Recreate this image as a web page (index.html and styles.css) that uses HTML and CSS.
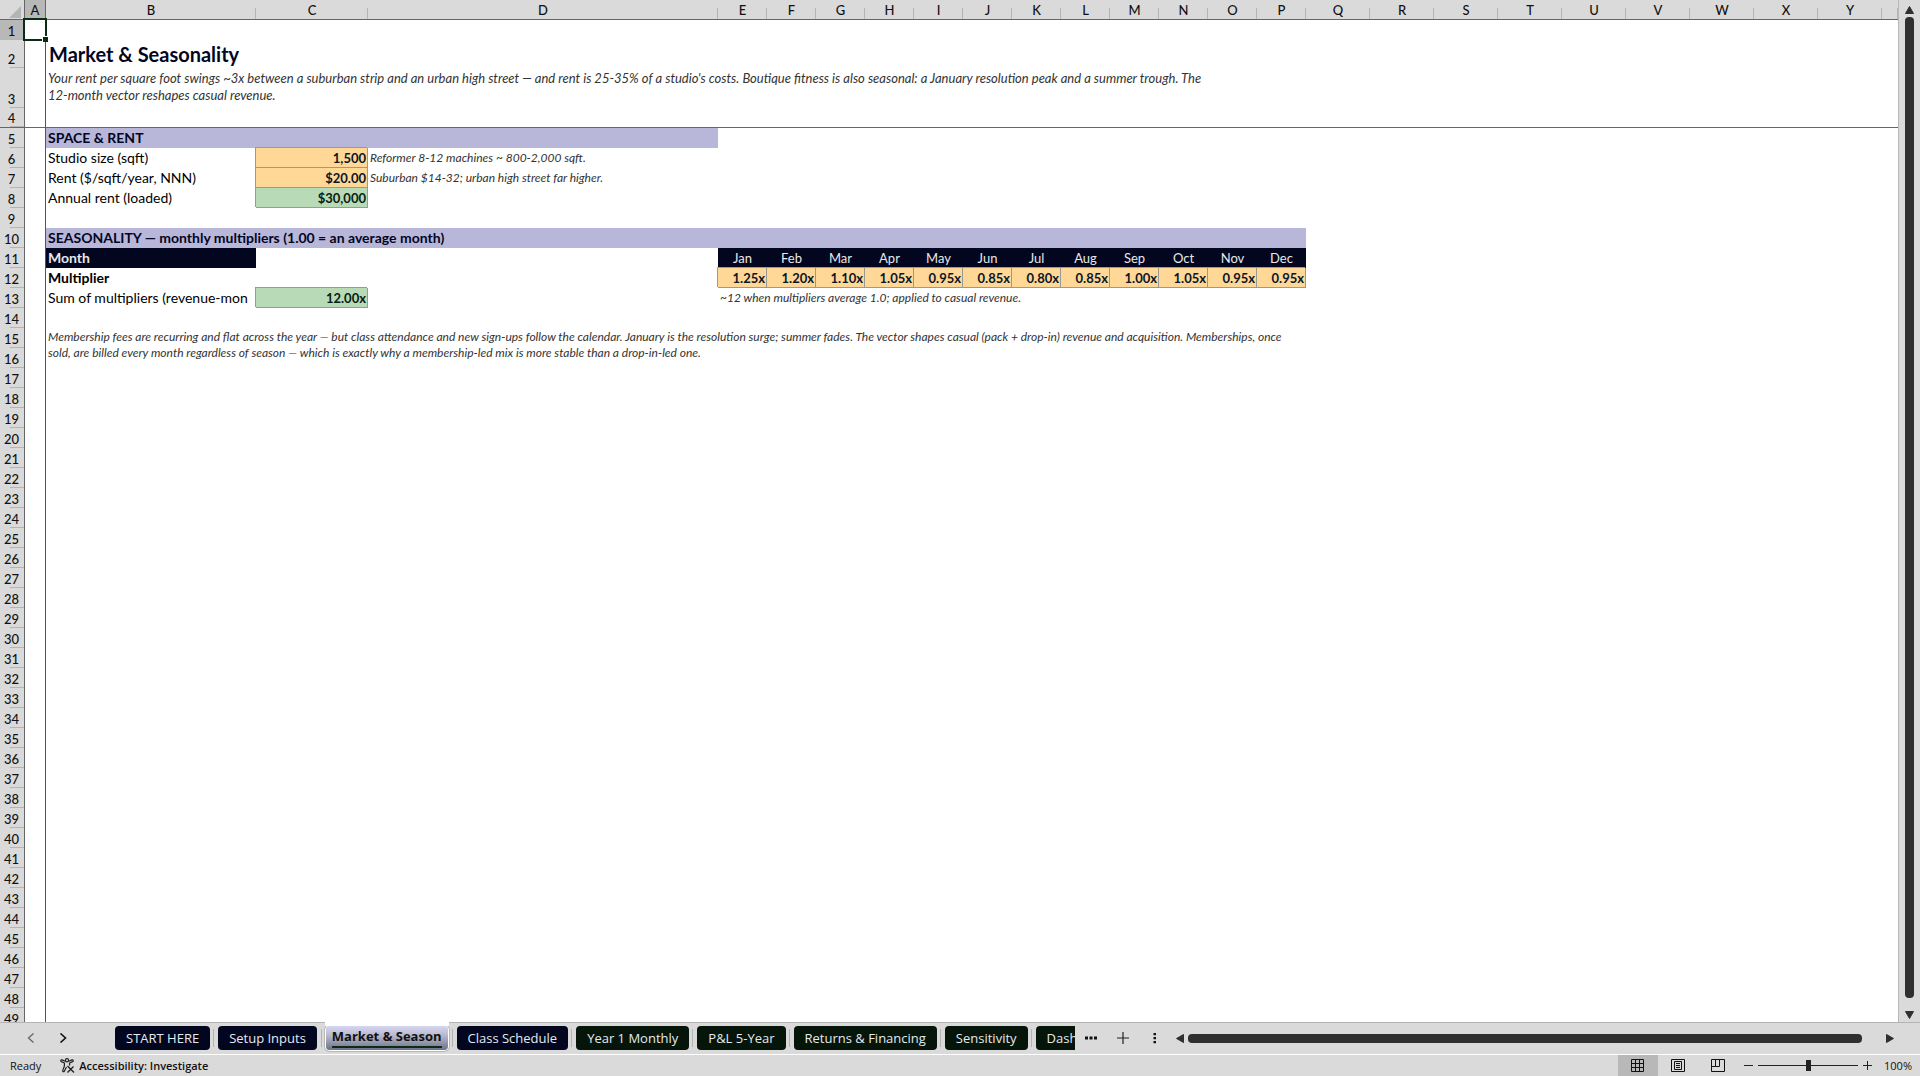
FILE: index.html
```html
<!DOCTYPE html>
<html lang="en">
<head>
    <meta charset="UTF-8">
    <meta name="viewport" content="width=device-width, initial-scale=1.0">
    <title>Market &amp; Seasonality</title>
    <link rel="stylesheet" href="styles.css">
</head>
<body>
    <main class="workspace">
        <div class="sheet">
            <table class="grid">
                <colgroup>
                    <col class="col-head">
                    <col class="col-a">
                    <col class="col-b">
                    <col class="col-c">
                    <col class="col-d">
                    <col class="col-month" span="12">
                    <col class="col-default" span="9">
                    <col>
                </colgroup>
                <thead>
                    <tr>
                        <th class="corner"><svg width="12" height="12" viewBox="0 0 12 12"><path d="M12 0v12H0z" fill="#b4b4b4"/></svg></th>
                        <th class="selected">A</th><th>B</th><th>C</th><th>D</th>
                        <th>E</th><th>F</th><th>G</th><th>H</th><th>I</th><th>J</th>
                        <th>K</th><th>L</th><th>M</th><th>N</th><th>O</th><th>P</th>
                        <th>Q</th><th>R</th><th>S</th><th>T</th><th>U</th><th>V</th>
                        <th>W</th><th>X</th><th>Y</th><th></th>
                    </tr>
                </thead>
                <tbody>
                    <tr><th class="selected">1</th><td class="cursor-cell"><span class="cursor"></span></td><td colspan="25"></td></tr>
                    <tr class="row-title"><th>2</th><td></td><td colspan="25" class="title">Market &amp; Seasonality</td></tr>
                    <tr class="row-intro"><th>3</th><td></td><td colspan="13" class="note intro">Your rent per square foot swings ~3x between a suburban strip and an urban high street — and rent is 25-35% of a studio's costs. Boutique fitness is also seasonal: a January resolution peak and a summer trough. The 12-month vector reshapes casual revenue.</td><td colspan="12"></td></tr>
                    <tr class="row-frozen"><th>4</th><td></td><td colspan="25"></td></tr>
                    <tr><th>5</th><td></td><td colspan="3" class="section">SPACE &amp; RENT</td><td colspan="22"></td></tr>
                    <tr><th>6</th><td></td><td>Studio size (sqft)</td><td class="input">1,500</td><td colspan="23" class="note">Reformer 8-12 machines ~ 800-2,000 sqft.</td></tr>
                    <tr><th>7</th><td></td><td>Rent ($/sqft/year, NNN)</td><td class="input">$20.00</td><td colspan="23" class="note">Suburban $14-32; urban high street far higher.</td></tr>
                    <tr><th>8</th><td></td><td>Annual rent (loaded)</td><td class="output">$30,000</td><td colspan="23"></td></tr>
                    <tr><th>9</th><td></td><td colspan="25"></td></tr>
                    <tr><th>10</th><td></td><td colspan="15" class="section">SEASONALITY — monthly multipliers (1.00 = an average month)</td><td colspan="10"></td></tr>
                    <tr>
                        <th>11</th><td></td><td class="dark strong">Month</td><td></td><td></td>
                        <td class="dark month">Jan</td><td class="dark month">Feb</td><td class="dark month">Mar</td>
                        <td class="dark month">Apr</td><td class="dark month">May</td><td class="dark month">Jun</td>
                        <td class="dark month">Jul</td><td class="dark month">Aug</td><td class="dark month">Sep</td>
                        <td class="dark month">Oct</td><td class="dark month">Nov</td><td class="dark month">Dec</td>
                        <td colspan="10"></td>
                    </tr>
                    <tr>
                        <th>12</th><td></td><td class="strong">Multiplier</td><td></td><td></td>
                        <td class="input">1.25x</td><td class="input">1.20x</td><td class="input">1.10x</td>
                        <td class="input">1.05x</td><td class="input">0.95x</td><td class="input">0.85x</td>
                        <td class="input">0.80x</td><td class="input">0.85x</td><td class="input">1.00x</td>
                        <td class="input">1.05x</td><td class="input">0.95x</td><td class="input">0.95x</td>
                        <td colspan="10"></td>
                    </tr>
                    <tr><th>13</th><td></td><td class="clip">Sum of multipliers (revenue-mon</td><td class="output">12.00x</td><td></td><td colspan="22" class="note">~12 when multipliers average 1.0; applied to casual revenue.</td></tr>
                    <tr><th>14</th><td></td><td colspan="25"></td></tr>
                    <tr><th>15</th><td></td><td colspan="15" rowspan="2" class="note closing">Membership fees are recurring and flat across the year — but class attendance and new sign-ups follow the calendar. January is the resolution surge; summer fades. The vector shapes casual (pack + drop-in) revenue and acquisition. Memberships, once sold, are billed every month regardless of season — which is exactly why a membership-led mix is more stable than a drop-in-led one.</td><td colspan="10"></td></tr>
                    <tr><th>16</th><td></td><td colspan="10"></td></tr>
                    <tr><th>17</th><td></td><td colspan="25"></td></tr>
                    <tr><th>18</th><td></td><td colspan="25"></td></tr>
                    <tr><th>19</th><td></td><td colspan="25"></td></tr>
                    <tr><th>20</th><td></td><td colspan="25"></td></tr>
                    <tr><th>21</th><td></td><td colspan="25"></td></tr>
                    <tr><th>22</th><td></td><td colspan="25"></td></tr>
                    <tr><th>23</th><td></td><td colspan="25"></td></tr>
                    <tr><th>24</th><td></td><td colspan="25"></td></tr>
                    <tr><th>25</th><td></td><td colspan="25"></td></tr>
                    <tr><th>26</th><td></td><td colspan="25"></td></tr>
                    <tr><th>27</th><td></td><td colspan="25"></td></tr>
                    <tr><th>28</th><td></td><td colspan="25"></td></tr>
                    <tr><th>29</th><td></td><td colspan="25"></td></tr>
                    <tr><th>30</th><td></td><td colspan="25"></td></tr>
                    <tr><th>31</th><td></td><td colspan="25"></td></tr>
                    <tr><th>32</th><td></td><td colspan="25"></td></tr>
                    <tr><th>33</th><td></td><td colspan="25"></td></tr>
                    <tr><th>34</th><td></td><td colspan="25"></td></tr>
                    <tr><th>35</th><td></td><td colspan="25"></td></tr>
                    <tr><th>36</th><td></td><td colspan="25"></td></tr>
                    <tr><th>37</th><td></td><td colspan="25"></td></tr>
                    <tr><th>38</th><td></td><td colspan="25"></td></tr>
                    <tr><th>39</th><td></td><td colspan="25"></td></tr>
                    <tr><th>40</th><td></td><td colspan="25"></td></tr>
                    <tr><th>41</th><td></td><td colspan="25"></td></tr>
                    <tr><th>42</th><td></td><td colspan="25"></td></tr>
                    <tr><th>43</th><td></td><td colspan="25"></td></tr>
                    <tr><th>44</th><td></td><td colspan="25"></td></tr>
                    <tr><th>45</th><td></td><td colspan="25"></td></tr>
                    <tr><th>46</th><td></td><td colspan="25"></td></tr>
                    <tr><th>47</th><td></td><td colspan="25"></td></tr>
                    <tr><th>48</th><td></td><td colspan="25"></td></tr>
                    <tr><th>49</th><td></td><td colspan="25"></td></tr>
                </tbody>
            </table>
        </div>
        <div class="scroll-y">
            <svg width="9" height="8" viewBox="0 0 9 8"><path d="M4.500 0.500L8.500 7.500h-8z" fill="#2f2f2f" stroke="#2f2f2f" stroke-linejoin="round"/></svg>
            <div class="thumb-y"></div>
            <svg width="9" height="8" viewBox="0 0 9 8"><path d="M4.500 7.500L8.500 0.500h-8z" fill="#2f2f2f" stroke="#2f2f2f" stroke-linejoin="round"/></svg>
        </div>
    </main>

    <nav class="tab-bar">
        <div class="tab-nav">
            <button class="icon-button" aria-label="Previous sheet"><svg width="8" height="10" viewBox="0 0 8 10"><path d="M6.500 0.500L1.500 5l5 4.500" fill="none" stroke="#666" stroke-width="1.300"/></svg></button>
            <button class="icon-button" aria-label="Next sheet"><svg width="8" height="10" viewBox="0 0 8 10"><path d="M1.500 0.500L6.500 5l-5 4.500" fill="none" stroke="#111" stroke-width="1.600"/></svg></button>
        </div>
        <div class="tabs">
            <button class="tab navy">START HERE</button>
            <button class="tab navy">Setup Inputs</button>
            <button class="tab active"><span class="tab-label">Market &amp; Season</span></button>
            <button class="tab navy">Class Schedule</button>
            <button class="tab green">Year 1 Monthly</button>
            <button class="tab green">P&amp;L 5-Year</button>
            <button class="tab green">Returns &amp; Financing</button>
            <button class="tab green">Sensitivity</button>
            <button class="tab green cut">Dash</button>
        </div>
        <div class="tab-tools">
            <button class="icon-button" aria-label="More sheets"><svg width="12" height="4" viewBox="0 0 12 4"><path d="M0 .5h3v3H0zM4.500 .5h3v3h-3zM9 .5h3v3H9z" fill="#111"/></svg></button>
            <button class="icon-button" aria-label="New sheet"><svg width="12" height="12" viewBox="0 0 12 12"><path d="M6 0v12M0 6h12" stroke="#222" stroke-width="1.200"/></svg></button>
            <button class="icon-button" aria-label="Resize"><svg width="4" height="12" viewBox="0 0 4 12"><path d="M.5 1h2.500v2.200H.5zM.5 5h2.500v2.200H.5zM.5 9h2.500v2.200H.5z" fill="#111"/></svg></button>
        </div>
        <div class="scroll-x">
            <svg width="8" height="9" viewBox="0 0 8 9"><path d="M0.500 4.500L7.500 0.500v8z" fill="#2f2f2f" stroke="#2f2f2f" stroke-linejoin="round"/></svg>
            <div class="thumb-x"></div>
            <svg width="8" height="9" viewBox="0 0 8 9"><path d="M7.500 4.500L0.500 0.500v8z" fill="#2f2f2f" stroke="#2f2f2f" stroke-linejoin="round"/></svg>
        </div>
    </nav>

    <footer class="status-bar">
        <span class="ready">Ready</span>
        <button class="accessibility">
            <svg width="15" height="15" viewBox="0 0 15 15" fill="none" stroke="#222" stroke-width="1.200" stroke-linejoin="round">
                <circle cx="7" cy="2.200" r="1.600"/>
                <path d="M5.300 3.300L2 1.900C.8 1.500.2 3 1.400 3.600L4.400 5v3L2.800 12.400c-.4 1.200 1 1.800 1.600.7L6.500 9"/>
                <path d="M8.700 3.300L12 1.900c1.200-.4 1.800 1.100.6 1.700L9.600 5v2.500"/>
                <path d="M7.500 8l6.500 6.500M13.500 8.500l-6 6" stroke-width="1.400"/>
            </svg>
            Accessibility: Investigate
        </button>
        <div class="views">
            <button class="view active" aria-label="Normal"><svg width="14" height="14" viewBox="0 0 14 14" fill="none" stroke="#111"><path d="M.5.500h12v12H.5zM4.500.500v12M8.500.500v12M.5 4.500h12M.5 8.500h12"/></svg></button>
            <button class="view" aria-label="Page layout"><svg width="14" height="14" viewBox="0 0 14 14" fill="none" stroke="#111"><path d="M.5.500h13v12H.5zM3.500 2.500h7v8h-7zM5 4.500h4M5 6.500h4M5 8.500h4"/></svg></button>
            <button class="view" aria-label="Page break preview"><svg width="14" height="14" viewBox="0 0 14 14" fill="none" stroke="#111"><path d="M.5.500h13v12H.5zM4.500.500v7M.5 7.500h8v-7"/></svg></button>
        </div>
        <div class="zoom">
            <button class="icon-button" aria-label="Zoom out"><svg width="9" height="9" viewBox="0 0 9 9"><path d="M0 4.500h9" stroke="#222"/></svg></button>
            <input class="zoom-range" type="range" min="0" max="100" value="50" aria-label="Zoom">
            <button class="icon-button" aria-label="Zoom in"><svg width="9" height="9" viewBox="0 0 9 9"><path d="M4.500 0v9M0 4.500h9" stroke="#222"/></svg></button>
        </div>
        <span class="zoom-level">100%</span>
    </footer>
</body>
</html>
```
FILE: styles.css
```css
* {
    margin: 0;
    padding: 0;
    box-sizing: border-box;
}

body {
    display: flex;
    flex-direction: column;
    height: 100vh;
    overflow: hidden;
    background: #dadada;
    color: #111;
    font-family: Lato, "Liberation Sans", sans-serif;
    font-size: 13px;
}

button {
    border: none;
    background: none;
    color: inherit;
    font: inherit;
}

svg {
    display: block;
    flex: none;
}

/* Sheet */
.workspace {
    display: flex;
    flex: 1;
    min-height: 0;
}

.sheet {
    flex: 1;
    min-width: 0;
    overflow: hidden;
    background: #fff;
    border-right: 1px solid #b8b8b8;
}

.grid {
    width: 100%;
    table-layout: fixed;
    border-collapse: separate;
    border-spacing: 0;
    line-height: 18px;
}

.col-head { width: 25px; }
.col-a { width: 21px; }
.col-b { width: 210px; }
.col-c { width: 112px; }
.col-d { width: 350px; }
.col-month { width: 49px; }
.col-default { width: 64px; }

.grid tr {
    height: 20px;
}

.grid th {
    font-weight: 500;
    background: #dadada;
}

.grid thead th {
    height: 20px;
    padding-top: 1px;
    line-height: 18px;
    border-bottom: 1px solid #666;
    background: linear-gradient(#b4b4b4, #b4b4b4) right bottom / 1px 11px no-repeat #dadada;
}

.grid thead .corner {
    padding: 4px 0 0 9px;
    border-right: 1px solid #666;
    background: #dadada;
}

.grid thead .selected {
    border-right: 1px solid #666;
    background: #b8b8b8;
}

.grid tbody th {
    padding-right: 1px;
    vertical-align: bottom;
    border-right: 1px solid #666;
    background: linear-gradient(#b4b4b4, #b4b4b4) right bottom / 14px 1px no-repeat #dadada;
}

.grid tbody .selected {
    background-color: #b8b8b8;
}

.grid td {
    padding: 0 2px;
    color: #000;
    font-size: 14px;
    line-height: 20px;
    white-space: nowrap;
    vertical-align: bottom;
}

.grid td:first-of-type {
    border-right: 1px solid #555;
}

.grid .row-title {
    height: 28px;
}

.grid .row-intro {
    height: 40px;
}

.grid .row-frozen th,
.grid .row-frozen td {
    border-bottom: 1px solid #666;
}

.grid .title {
    padding: 0 3px;
    color: #02061f;
    font-size: 20px;
    font-weight: bold;
    line-height: 28px;
}

.grid .note {
    color: #333;
    font-size: 12px;
    font-style: italic;
}

.grid .intro {
    padding-top: 2px;
    font-size: 13px;
    line-height: 17px;
    white-space: normal;
    vertical-align: top;
}

.grid .closing {
    padding: 1px 20px 0 2px;
    line-height: 16px;
    white-space: normal;
    vertical-align: top;
}

.grid .section {
    background: #b8b7da;
    color: #02061f;
    font-weight: bold;
}

.grid .strong {
    font-weight: bold;
}

.grid .clip {
    overflow: hidden;
}

.grid .dark {
    background: #02061f;
    color: #e8e8e8;
}

.grid .month {
    font-size: 13px;
    text-align: center;
}

.grid .input,
.grid .output {
    background: #ffd898;
    color: #0a1626;
    font-size: 13px;
    font-weight: bold;
    text-align: right;
    box-shadow: inset -1px -1px 0 #9c9a90, -1px -1px 0 #9c9a90;
}

.grid .output {
    background: #b8dab7;
    color: #082010;
}

/* Selection frame round the current cell */
.cursor-cell {
    position: relative;
}

.cursor {
    position: absolute;
    top: -2px;
    left: -2px;
    width: 24px;
    height: 23px;
    border: 2px solid #0a2c12;
}

.cursor::after {
    content: "";
    position: absolute;
    right: -3px;
    bottom: -3px;
    width: 5px;
    height: 5px;
    background: #0a2c12;
    border-top: 1px solid #fff;
    border-left: 1px solid #fff;
}

/* Scroll bars */
.scroll-y {
    display: flex;
    flex-direction: column;
    align-items: center;
    width: 21px;
    padding: 6px 0 3px;
}

.thumb-y {
    flex: 1;
    width: 9px;
    margin: 3px 0 13px;
    border-radius: 4px;
    background: #2f2f2f;
}

.scroll-x {
    display: flex;
    flex: 1;
    align-items: center;
    padding-right: 26px;
}

.thumb-x {
    flex: 1;
    height: 9px;
    margin: 0 24px 0 4px;
    border-radius: 4px;
    background: #2f2f2f;
}

/* Sheet tabs */
.tab-bar {
    display: flex;
    align-items: center;
    height: 33px;
    border-top: 1px solid #b4b4b4;
    border-bottom: 1px solid #fff;
    padding-bottom: 1px;
    font-family: "Open Sans", "Liberation Sans", sans-serif;
    font-size: 13px;
}

.tab-nav {
    display: flex;
    gap: 24px;
    width: 115px;
    padding-left: 27px;
}

/* pulled up over the bar's top line so the active tab can break it */
.tabs {
    display: flex;
    align-self: stretch;
    align-items: center;
    gap: 8px;
    width: 960px;
    margin-top: -1px;
    padding-top: 1px;
    overflow: hidden;
}

.tab {
    position: relative;
    flex: none;
    height: 24px;
    padding: 0 11px;
    border-radius: 4px;
    color: #e4eaf0;
    line-height: 24px;
    white-space: nowrap;
}

/* thin rule in the gap before each tab */
.tab + .tab::before {
    content: "";
    position: absolute;
    top: 3px;
    left: -5px;
    width: 1px;
    height: 18px;
    background: #b4b4b4;
}

.navy {
    background: #02061f;
}

.green {
    background: #051509;
}

.tab.active {
    margin: 0 1px;
    padding: 0 6px;
    background: linear-gradient(#d6d6f2, #b8b8cc 40%, #6c7088);
    box-shadow: 0 0 0 1px #fff, 0 0 0 2px #b8b8b8;
    color: #111;
    font-weight: bold;
}

.tab.active::after {
    content: "";
    position: absolute;
    top: -4px;
    left: -1px;
    right: -1px;
    height: 4px;
    background: #fff;
}

.tab-label {
    display: block;
    height: 20px;
    border-bottom: 2px solid #0a2c12;
    line-height: 16px;
}

.cut {
    min-width: 80px;
    text-align: left;
}

.tab-tools {
    display: flex;
    width: 101px;
}

.icon-button {
    display: flex;
    align-items: center;
}

.tab-tools .icon-button {
    justify-content: center;
    width: 32px;
}

/* Status bar */
.status-bar {
    display: flex;
    align-items: center;
    height: 21px;
    padding: 0 8px 0 10px;
    font-family: "Open Sans", "Liberation Sans", sans-serif;
    font-size: 11px;
}

.accessibility {
    display: flex;
    align-items: center;
    gap: 4px;
    margin: 0 auto 0 19px;
    font-weight: 600;
}

.views {
    display: flex;
    height: 100%;
}

.view {
    display: flex;
    align-items: center;
    justify-content: center;
    width: 40px;
}

.view.active {
    background: #b8b8b8;
}

.zoom {
    display: flex;
    align-items: center;
    gap: 5px;
    margin: 0 12px 0 6px;
}

.zoom-range {
    appearance: none;
    width: 100px;
    height: 11px;
    background: linear-gradient(#222, #222) center / 100% 1px no-repeat;
}

.zoom-range::-webkit-slider-thumb {
    appearance: none;
    width: 5px;
    height: 11px;
    background: #222;
}
```
